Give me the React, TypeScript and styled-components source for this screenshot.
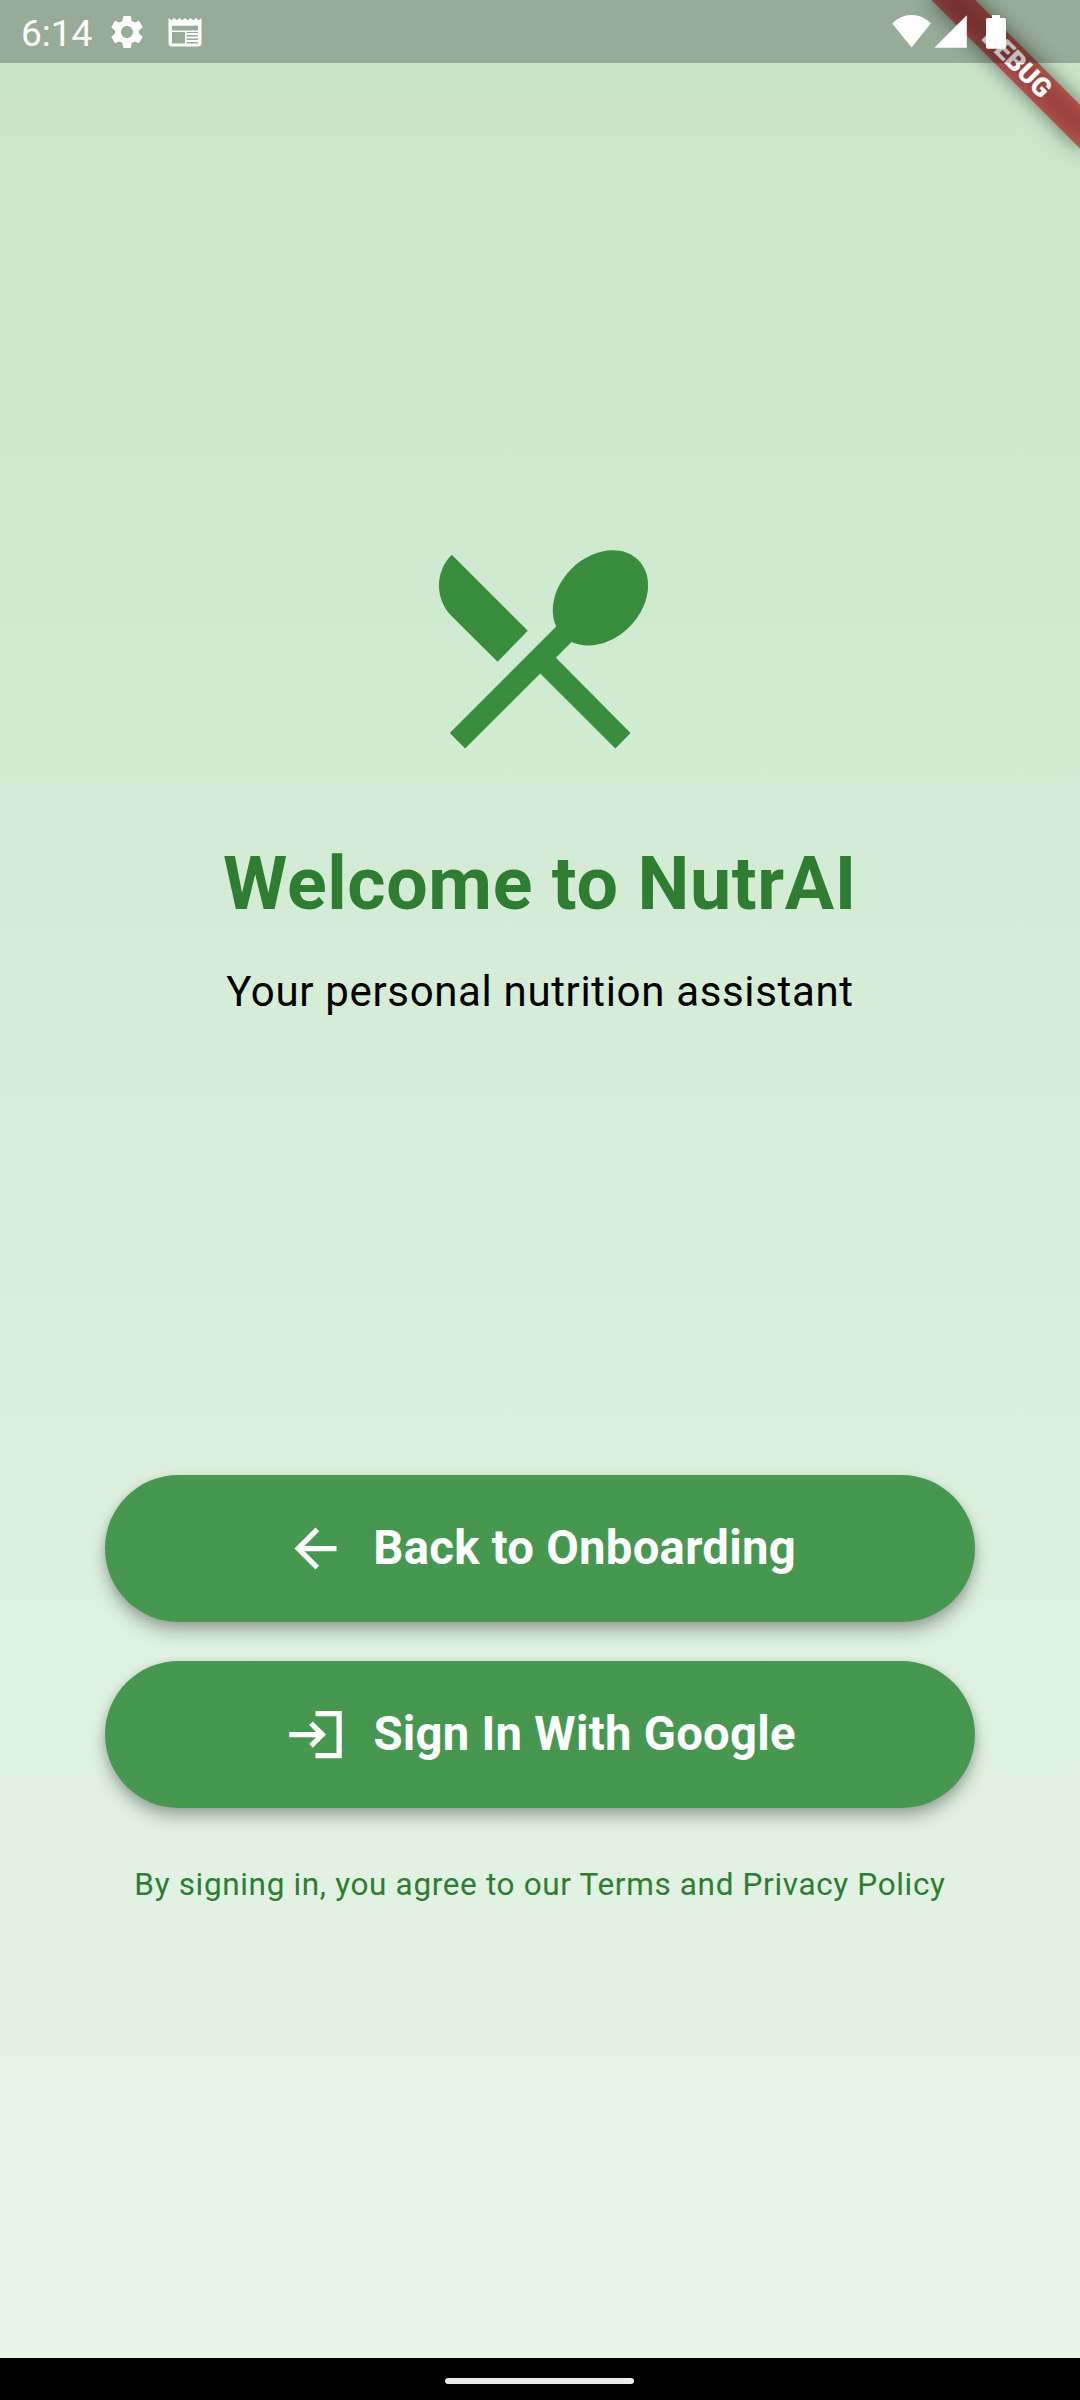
import React from "react";
import styled, { createGlobalStyle } from "styled-components";

const GlobalStyle = createGlobalStyle`
  * { box-sizing: border-box; }
  body { margin: 0; font-family: Roboto, sans-serif; }
`;

const Screen = styled.div`
  position: relative;
  display: flex;
  flex-direction: column;
  width: 1080px;
  height: 2400px;
  overflow: hidden;
  background: linear-gradient(180deg, #c8e6c9 0%, #e8f5e9 100%);
`;

const StatusBar = styled.header`
  position: relative;
  z-index: 2;
  display: flex;
  justify-content: space-between;
  height: 63px;
  padding: 0 72px 0 21px;
  background: rgba(0, 0, 0, 0.25);
  color: #fff;
`;

const StatusGroup = styled.div<{ $gap: number }>`
  display: flex;
  align-items: center;
  gap: ${(p) => p.$gap}px;
`;

const Clock = styled.span`
  width: 65px;
  font-size: 37px;
  line-height: 42px;
  padding-top: 4px;
  white-space: nowrap;
`;

const Glyph = styled.svg`
  display: block;
  flex: none;
  fill: currentColor;
`;

/* Corner ribbon: rotated around the top right corner of the screen. */
const Ribbon = styled.div`
  position: absolute;
  z-index: 1;
  top: 0;
  left: 1080px;
  width: 0;
  height: 0;
  transform: rotate(45deg);
`;

const RibbonShadow = styled.div`
  position: absolute;
  left: -105px;
  top: 73.5px;
  width: 210px;
  height: 31.5px;
  background: rgba(0, 0, 0, 0.5);
  filter: blur(10.4px);
`;

const RibbonBand = styled.div`
  position: absolute;
  left: -105px;
  top: 73.5px;
  width: 210px;
  height: 31.5px;
  background: rgba(183, 28, 28, 0.627);
  color: #fff;
  font-size: 26.8px;
  font-weight: 900;
  line-height: 31.5px;
  text-align: center;
`;

const Main = styled.main`
  flex: 1;
  display: flex;
  flex-direction: column;
  align-items: center;
  padding: 452.5px 105px 0;
`;

const Title = styled.h1`
  margin: 62px 0 0;
  font-size: 73.5px;
  font-weight: 700;
  line-height: 88px;
  letter-spacing: 0.63px;
  color: #2e7d32;
  white-space: nowrap;
`;

const Subtitle = styled.p`
  margin: 34px 0 0;
  font-size: 42px;
  line-height: 60px;
  letter-spacing: 0.656px;
  color: #000;
  white-space: nowrap;
`;

const Actions = styled.div`
  display: flex;
  flex-direction: column;
  align-self: stretch;
  gap: 39.4px;
  margin-top: 453px;
`;

const ActionButton = styled.button`
  display: flex;
  align-items: center;
  justify-content: center;
  gap: 26.25px;
  height: 147px;
  padding: 0;
  border: 0;
  border-radius: 73.5px;
  background: #469850;
  color: #fff;
  font-family: inherit;
  font-size: 47.25px;
  font-weight: 700;
  letter-spacing: 0.2625px;
  box-shadow: 0 10px 16px rgba(0, 0, 0, 0.26), 0 2px 8px rgba(0, 0, 0, 0.11);
`;

const Label = styled.span`
  padding-bottom: 2px;
  white-space: nowrap;
`;

const Terms = styled.p`
  margin: 56px 0 0;
  font-size: 31.5px;
  line-height: 42px;
  letter-spacing: 0.656px;
  color: #2e7d32;
  white-space: nowrap;
`;

const NavBar = styled.footer`
  display: flex;
  height: 42px;
  padding: 20px 0 0 445px;
  background: #000;
`;

const NavHandle = styled.div`
  width: 189px;
  height: 6px;
  border-radius: 3px;
  background: #ebebeb;
`;

const GearIcon = () => (
  <Glyph width="40" height="40" viewBox="0 0 24 24">
    <path d="M19.14,12.94c0.04-0.3,0.06-0.61,0.06-0.94c0-0.32-0.02-0.64-0.07-0.94l2.03-1.58c0.18-0.14,0.23-0.41,0.12-0.61l-1.92-3.32c-0.12-0.22-0.37-0.29-0.59-0.22l-2.39,0.96c-0.5-0.38-1.03-0.7-1.62-0.94L14.4,2.81c-0.04-0.24-0.24-0.41-0.48-0.41h-3.84c-0.24,0-0.43,0.17-0.47,0.41L9.25,5.35C8.66,5.59,8.12,5.92,7.63,6.29L5.24,5.33c-0.22-0.08-0.47,0-0.59,0.22L2.74,8.87C2.62,9.08,2.66,9.34,2.86,9.48l2.03,1.58C4.84,11.36,4.8,11.69,4.8,12s0.02,0.64,0.07,0.94l-2.03,1.58c-0.18,0.14-0.23,0.41-0.12,0.61l1.92,3.32c0.12,0.22,0.37,0.29,0.59,0.22l2.39-0.96c0.5,0.38,1.03,0.7,1.62,0.94l0.36,2.54c0.05,0.24,0.24,0.41,0.48,0.41h3.84c0.24,0,0.44-0.17,0.47-0.41l0.36-2.54c0.59-0.24,1.13-0.56,1.62-0.94l2.39,0.96c0.22,0.08,0.47,0,0.59-0.22l1.92-3.32c0.12-0.22,0.07-0.47-0.12-0.61L19.14,12.94z M12,15.6c-1.98,0-3.6-1.62-3.6-3.6s1.62-3.6,3.6-3.6s3.6,1.62,3.6,3.6S13.98,15.6,12,15.6z" />
  </Glyph>
);

const NewsIcon = () => (
  <Glyph width="34" height="30" viewBox="0 0 34 30">
    <path
      fillRule="evenodd"
      d="M.5 1l2.800 2.300L6 1l2.800 2.300L11.500 1l2.800 2.300L17 1l2.800 2.300L22.500 1l2.800 2.300L28 1l2.800 2.300L33.500 1V26a3.500 3.500 0 0 1-3.500 3.500H4A3.500 3.500 0 0 1 .5 26zM4 8.700V13.500H30V8.700zM4 15V26.500H17V15zM18.500 15V16H30V15zM18.500 18V19.500H30V18zM18.500 21.500V23H30V21.500zM18.500 25V26.500H30V25z"
    />
  </Glyph>
);

const SignalIcons = () => (
  <Glyph width="116" height="36" viewBox="0 0 116 36">
    <path d="M.3 9.500C5.500 4 12 1 19.500 1S33.500 4 38.800 9.500L19.500 33.600z" />
    <path d="M42.300 33.800L74.800 1.200V33.800z" />
    <path d="M100 1h8v3h4.200a1.800 1.800 0 0 1 1.800 1.800V33a1.800 1.800 0 0 1-1.800 1.800H95.800A1.800 1.800 0 0 1 94 33V5.800A1.800 1.800 0 0 1 95.800 4H100z" />
  </Glyph>
);

const UtensilsIcon = () => (
  <Glyph width="262.5" height="262.5" viewBox="0 0 24 24" color="#388e3c">
    <path d="M8.1 13.320L10.860 10.490L3.910 3.540c-1.560 1.560-1.560 4.050 0 5.620zM14.860 11.530c1.530.710 3.700.210 5.290-1.380 1.910-1.910 2.280-4.650.810-6.120-1.460-1.460-4.200-1.100-6.120.810-1.590 1.590-2.090 3.740-1.380 5.270L3.730 19.850l1.400 1.400L12 14.410l6.870 6.840 1.390-1.400L13.430 12.970z" />
  </Glyph>
);

const BackIcon = () => (
  <Glyph width="63" height="63" viewBox="0 0 24 24">
    <path d="M20 11H7.830l5.590-5.590L12 4l-8 8 8 8 1.410-1.410L7.830 13H20v-2z" />
  </Glyph>
);

const LoginIcon = () => (
  <Glyph width="63" height="63" viewBox="0 0 24 24">
    <path d="M11 7L9.600 8.400l2.600 2.600H2v2h10.200l-2.600 2.600L11 17l5-5-5-5zM20 19h-8v2h10V3H12v2h8v14z" />
  </Glyph>
);

export default function App() {
  return (
    <Screen>
      <GlobalStyle />
      <StatusBar>
        <StatusGroup $gap={21}>
          <Clock>6:14</Clock>
          <GearIcon />
          <NewsIcon />
        </StatusGroup>
        <StatusGroup $gap={0}>
          <SignalIcons />
        </StatusGroup>
      </StatusBar>
      <Ribbon>
        <RibbonShadow />
        <RibbonBand>DEBUG</RibbonBand>
      </Ribbon>
      <Main>
        <UtensilsIcon />
        <Title>Welcome to NutrAI</Title>
        <Subtitle>Your personal nutrition assistant</Subtitle>
        <Actions>
          <ActionButton>
            <BackIcon />
            <Label>Back to Onboarding</Label>
          </ActionButton>
          <ActionButton>
            <LoginIcon />
            <Label>Sign In With Google</Label>
          </ActionButton>
        </Actions>
        <Terms>By signing in, you agree to our Terms and Privacy Policy</Terms>
      </Main>
      <NavBar>
        <NavHandle />
      </NavBar>
    </Screen>
  );
}
